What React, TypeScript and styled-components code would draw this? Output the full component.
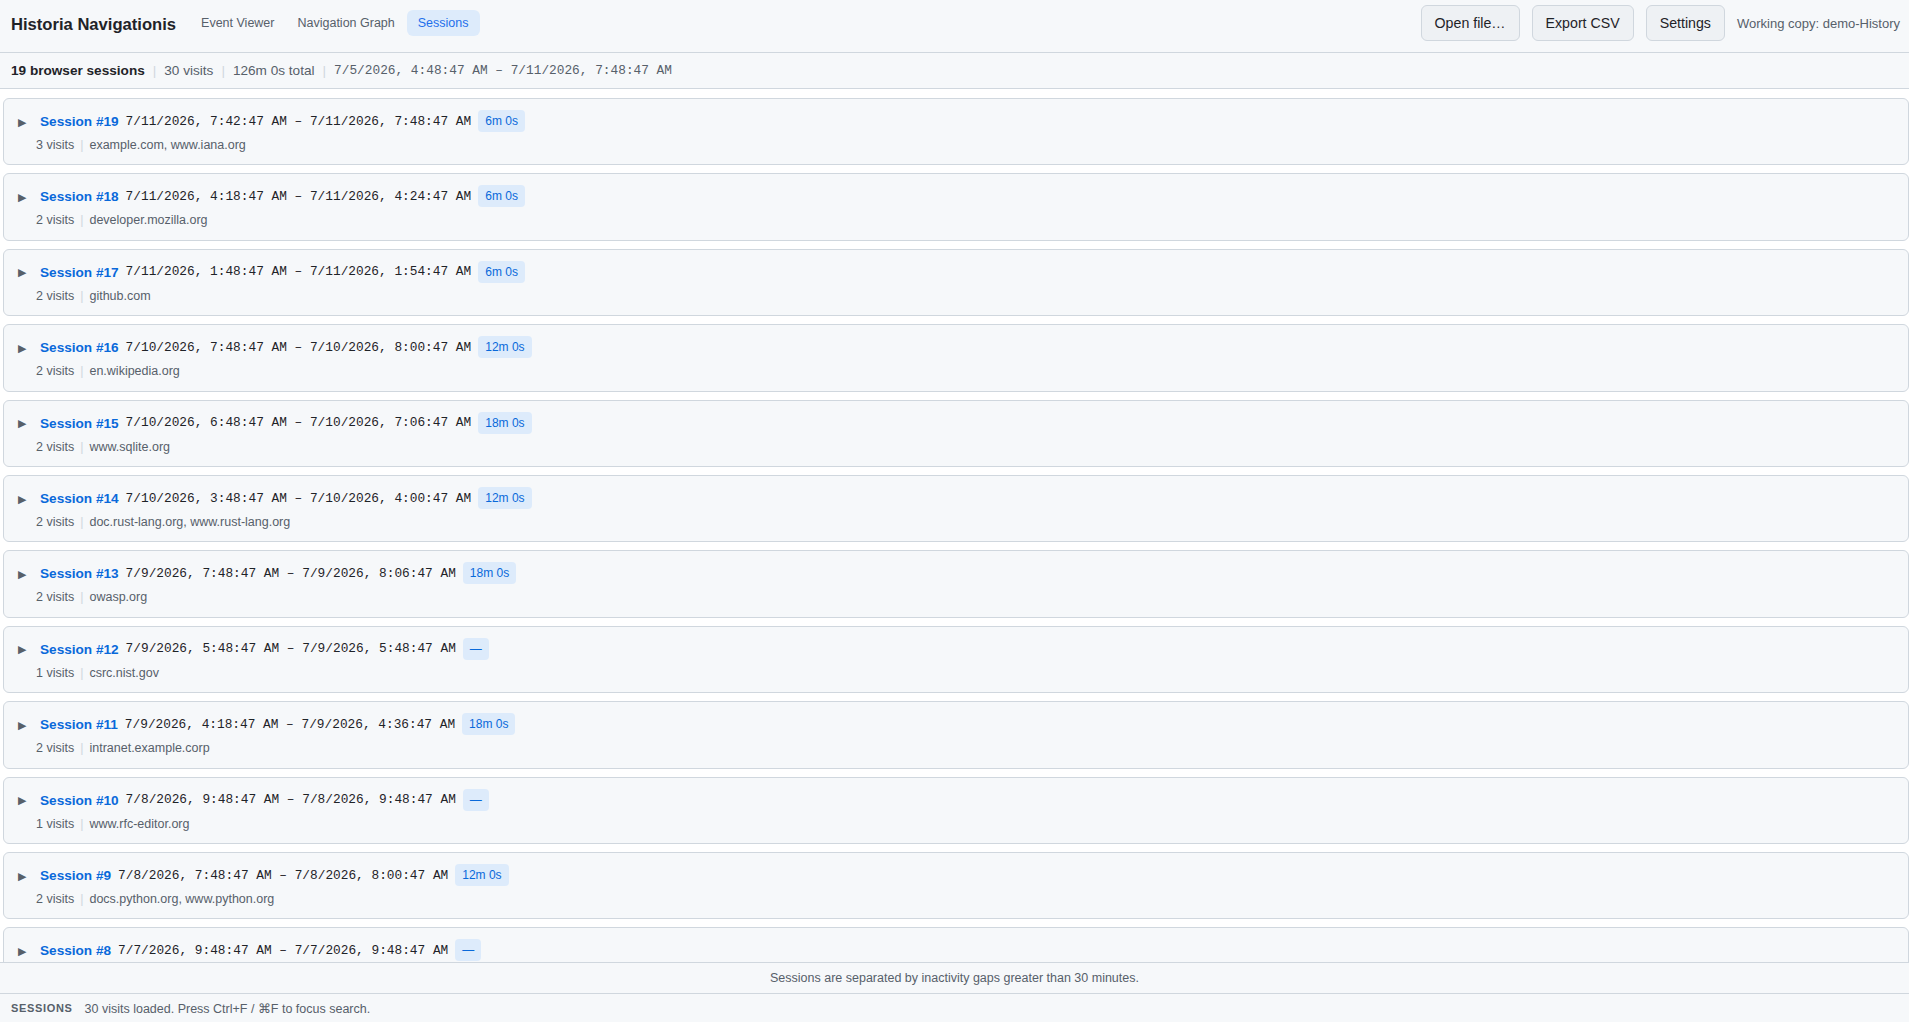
import React from "react";
import styled, { createGlobalStyle } from "styled-components";

const GlobalStyle = createGlobalStyle`
  html, body, #root { height: 100%; }
  body {
    margin: 0;
    font-family: "Liberation Sans", Arial, sans-serif;
    color: #1f2328;
    background: #ffffff;
  }
  * { box-sizing: border-box; }
`;

const Page = styled.div`
  display: flex;
  flex-direction: column;
  height: 100vh;
  overflow: hidden;
`;

const Header = styled.header`
  display: flex;
  align-items: center;
  height: 53px;
  padding: 0 9px 0 11px;
  background: #f6f8fa;
  border-bottom: 1px solid #d0d7de;
  flex-shrink: 0;
`;

const Title = styled.h1`
  margin: 0 14px 0 0;
  font-size: 16.6px;
  font-weight: 700;
  color: #1f2328;
  padding-bottom: 2px;
`;

const Tabs = styled.nav`
  display: flex;
  gap: 1px;
  align-self: flex-start;
  margin-top: 10px;
`;

const Tab = styled.button<{ $active?: boolean }>`
  font-family: inherit;
  font-size: 12.5px;
  height: 26px;
  padding: 0 11px;
  border: none;
  border-radius: 6px;
  cursor: pointer;
  background: ${(p) => (p.$active ? "#ddebfb" : "transparent")};
  color: ${(p) => (p.$active ? "#1f6feb" : "#57606a")};
`;

const Spacer = styled.div`
  flex: 1;
`;

const Actions = styled.div`
  display: flex;
  align-items: center;
  gap: 12px;
  align-self: flex-start;
  margin-top: 5px;
`;

const Button = styled.button`
  font-family: inherit;
  font-size: 14.2px;
  height: 36px;
  padding: 0 13px;
  border: 1px solid #d0d7de;
  border-radius: 6px;
  background: #eef1f4;
  color: #1f2328;
  cursor: pointer;
`;

const WorkingCopy = styled.span`
  font-size: 13px;
  color: #57606a;
`;

const SubBar = styled.div`
  display: flex;
  align-items: center;
  height: 36px;
  padding: 0 11px;
  background: #f6f8fa;
  border-bottom: 1px solid #d0d7de;
  font-size: 13.6px;
  color: #57606a;
  flex-shrink: 0;
`;

const Strong = styled.span`
  font-weight: 700;
  color: #1f2328;
`;

const Sep = styled.span`
  color: #d0d7de;
  margin: 0 8px;
`;

const MonoMuted = styled.span`
  font-family: "Liberation Mono", "Courier New", monospace;
  font-size: 12.8px;
  color: #57606a;
`;

const List = styled.main`
  flex: 1;
  overflow-y: scroll;
  padding: 9px 0 9px 3px;
  display: flex;
  flex-direction: column;
  gap: 8px;
  background: #ffffff;

  &::-webkit-scrollbar {
    width: 8px;
  }
  &::-webkit-scrollbar-track {
    background: #f3f3f3;
  }
  &::-webkit-scrollbar-thumb {
    background: #cdcdcd;
    border-radius: 3px;
    border-left: 1px solid #f3f3f3;
    border-right: 1px solid #f3f3f3;
  }
`;

const Card = styled.section`
  flex-shrink: 0;
  background: #f6f8fa;
  border: 1px solid #d0d7de;
  border-radius: 6px;
  padding: 10px 12px 10px 14px;
  display: flex;
  flex-direction: column;
  gap: 4px;
`;

const CardHead = styled.div`
  display: flex;
  align-items: center;
  height: 24px;
`;

const Chevron = styled.span`
  font-size: 11px;
  color: #57606a;
  width: 22px;
  padding-top: 2px;
`;

const SessionLink = styled.a`
  font-size: 13.6px;
  font-weight: 700;
  color: #0969da;
  text-decoration: none;
  margin-right: 7px;
  padding-top: 1px;
`;

const Range = styled.span`
  font-family: "Liberation Mono", "Courier New", monospace;
  font-size: 12.8px;
  color: #1f2328;
  margin-right: 7px;
`;

const Badge = styled.span`
  display: inline-flex;
  align-items: center;
  height: 22px;
  padding: 0 7px;
  border-radius: 4px;
  background: #ddebfb;
  color: #0969da;
  font-size: 12px;
`;

const Meta = styled.div`
  display: flex;
  align-items: center;
  padding-left: 18px;
  font-size: 12.5px;
  line-height: 17.4px;
  color: #57606a;
`;

const MetaSep = styled.span`
  color: #d0d7de;
  margin: 0 6px;
`;

const Note = styled.div`
  flex-shrink: 0;
  height: 32px;
  display: flex;
  align-items: center;
  justify-content: center;
  background: #f6f8fa;
  border-top: 1px solid #d0d7de;
  border-bottom: 1px solid #d0d7de;
  font-size: 12.5px;
  color: #57606a;
`;

const Status = styled.footer`
  flex-shrink: 0;
  height: 28px;
  display: flex;
  align-items: center;
  gap: 12px;
  padding: 0 11px;
  background: #f6f8fa;
  font-size: 12.5px;
  color: #57606a;
`;

const StatusLabel = styled.span`
  font-size: 11px;
  font-weight: 700;
  letter-spacing: 0.06em;
  color: #57606a;
`;

type Session = {
  id: number;
  start: string;
  end: string;
  dur: string;
  visits: number;
  hosts: string;
};

const sessions: Session[] = [
  { id: 19, start: "7/11/2026, 7:42:47 AM", end: "7/11/2026, 7:48:47 AM", dur: "6m 0s", visits: 3, hosts: "example.com, www.iana.org" },
  { id: 18, start: "7/11/2026, 4:18:47 AM", end: "7/11/2026, 4:24:47 AM", dur: "6m 0s", visits: 2, hosts: "developer.mozilla.org" },
  { id: 17, start: "7/11/2026, 1:48:47 AM", end: "7/11/2026, 1:54:47 AM", dur: "6m 0s", visits: 2, hosts: "github.com" },
  { id: 16, start: "7/10/2026, 7:48:47 AM", end: "7/10/2026, 8:00:47 AM", dur: "12m 0s", visits: 2, hosts: "en.wikipedia.org" },
  { id: 15, start: "7/10/2026, 6:48:47 AM", end: "7/10/2026, 7:06:47 AM", dur: "18m 0s", visits: 2, hosts: "www.sqlite.org" },
  { id: 14, start: "7/10/2026, 3:48:47 AM", end: "7/10/2026, 4:00:47 AM", dur: "12m 0s", visits: 2, hosts: "doc.rust-lang.org, www.rust-lang.org" },
  { id: 13, start: "7/9/2026, 7:48:47 AM", end: "7/9/2026, 8:06:47 AM", dur: "18m 0s", visits: 2, hosts: "owasp.org" },
  { id: 12, start: "7/9/2026, 5:48:47 AM", end: "7/9/2026, 5:48:47 AM", dur: "—", visits: 1, hosts: "csrc.nist.gov" },
  { id: 11, start: "7/9/2026, 4:18:47 AM", end: "7/9/2026, 4:36:47 AM", dur: "18m 0s", visits: 2, hosts: "intranet.example.corp" },
  { id: 10, start: "7/8/2026, 9:48:47 AM", end: "7/8/2026, 9:48:47 AM", dur: "—", visits: 1, hosts: "www.rfc-editor.org" },
  { id: 9, start: "7/8/2026, 7:48:47 AM", end: "7/8/2026, 8:00:47 AM", dur: "12m 0s", visits: 2, hosts: "docs.python.org, www.python.org" },
  { id: 8, start: "7/7/2026, 9:48:47 AM", end: "7/7/2026, 9:48:47 AM", dur: "—", visits: 1, hosts: "news.ycombinator.com" },
  { id: 7, start: "7/7/2026, 6:48:47 AM", end: "7/7/2026, 6:54:47 AM", dur: "6m 0s", visits: 1, hosts: "stackoverflow.com" },
  { id: 6, start: "7/6/2026, 9:48:47 PM", end: "7/6/2026, 9:48:47 PM", dur: "—", visits: 1, hosts: "www.w3.org" },
  { id: 5, start: "7/6/2026, 6:48:47 PM", end: "7/6/2026, 6:54:47 PM", dur: "6m 0s", visits: 2, hosts: "datatracker.ietf.org" },
  { id: 4, start: "7/6/2026, 10:48:47 AM", end: "7/6/2026, 10:54:47 AM", dur: "6m 0s", visits: 1, hosts: "www.mozilla.org" },
  { id: 3, start: "7/5/2026, 9:48:47 PM", end: "7/5/2026, 9:48:47 PM", dur: "—", visits: 1, hosts: "www.gnu.org" },
  { id: 2, start: "7/5/2026, 7:48:47 AM", end: "7/5/2026, 7:54:47 AM", dur: "6m 0s", visits: 1, hosts: "www.kernel.org" },
  { id: 1, start: "7/5/2026, 4:48:47 AM", end: "7/5/2026, 4:48:47 AM", dur: "—", visits: 1, hosts: "example.org" },
];

function SessionCard({ s }: { s: Session }) {
  return (
    <Card>
      <CardHead>
        <Chevron>▶</Chevron>
        <SessionLink href="#">Session #{s.id}</SessionLink>
        <Range>
          {s.start} – {s.end}
        </Range>
        <Badge>{s.dur}</Badge>
      </CardHead>
      <Meta>
        <span>{s.visits} visits</span>
        <MetaSep>|</MetaSep>
        <span>{s.hosts}</span>
      </Meta>
    </Card>
  );
}

export default function App() {
  return (
    <>
      <GlobalStyle />
      <Page>
        <Header>
          <Title>Historia Navigationis</Title>
          <Tabs>
            <Tab>Event Viewer</Tab>
            <Tab>Navigation Graph</Tab>
            <Tab $active>Sessions</Tab>
          </Tabs>
          <Spacer />
          <Actions>
            <Button>Open file…</Button>
            <Button>Export CSV</Button>
            <Button>Settings</Button>
            <WorkingCopy>Working copy: demo-History</WorkingCopy>
          </Actions>
        </Header>
        <SubBar>
          <Strong>19 browser sessions</Strong>
          <Sep>|</Sep>
          <span>30 visits</span>
          <Sep>|</Sep>
          <span>126m 0s total</span>
          <Sep>|</Sep>
          <MonoMuted>7/5/2026, 4:48:47 AM – 7/11/2026, 7:48:47 AM</MonoMuted>
        </SubBar>
        <List>
          {sessions.map((s) => (
            <SessionCard key={s.id} s={s} />
          ))}
        </List>
        <Note>Sessions are separated by inactivity gaps greater than 30 minutes.</Note>
        <Status>
          <StatusLabel>SESSIONS</StatusLabel>
          <span>30 visits loaded. Press Ctrl+F / ⌘F to focus search.</span>
        </Status>
      </Page>
    </>
  );
}
